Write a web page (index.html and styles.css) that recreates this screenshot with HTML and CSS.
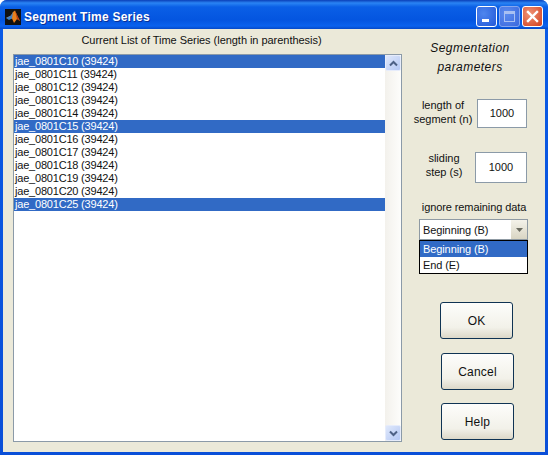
FILE: index.html
```html
<!DOCTYPE html>
<html lang="en">
<head>
<meta charset="utf-8">
<title>Segment Time Series</title>
<link rel="stylesheet" href="styles.css">
</head>
<body>
<div class="window">
  <header class="titlebar">
    <svg class="app-icon" width="16" height="16" viewBox="0 0 16 16">
      <rect width="16" height="16" fill="#111"/>
      <path d="M1 9 L6 6.5 L8 3 L10 1.5 L12 6 L15 12 L12 10 L9 14 L7 9.5 Z" fill="#e8801c"/>
      <path d="M1 9 L6 6.5 L8 3 L7 9.5 L4 11 Z" fill="#3f7fc4"/>
      <path d="M10 1.5 L12 6 L15 12 L12 10 Z" fill="#b83a12"/>
    </svg>
    <span class="title">Segment Time Series</span>
    <div class="controls">
      <div class="ctl ctl-min"><span class="min-glyph"></span></div>
      <div class="ctl ctl-max"><span class="max-glyph"></span></div>
      <div class="ctl ctl-close">
        <svg width="13" height="13" viewBox="0 0 13 13"><path d="M2 2 L11 11 M11 2 L2 11" stroke="#fff" stroke-width="2.4" stroke-linecap="square"/></svg>
      </div>
    </div>
  </header>
  <main class="client">
    <section class="left">
      <div class="list-heading">Current List of Time Series (length in parenthesis)</div>
      <div class="listbox">
        <div class="rows">
          <div class="row sel">jae_0801C10 (39424)</div>
          <div class="row">jae_0801C11 (39424)</div>
          <div class="row">jae_0801C12 (39424)</div>
          <div class="row">jae_0801C13 (39424)</div>
          <div class="row">jae_0801C14 (39424)</div>
          <div class="row sel">jae_0801C15 (39424)</div>
          <div class="row">jae_0801C16 (39424)</div>
          <div class="row">jae_0801C17 (39424)</div>
          <div class="row">jae_0801C18 (39424)</div>
          <div class="row">jae_0801C19 (39424)</div>
          <div class="row">jae_0801C20 (39424)</div>
          <div class="row sel">jae_0801C25 (39424)</div>
        </div>
        <div class="scrollbar">
          <div class="sb-btn"><svg width="9" height="7" viewBox="0 0 9 7"><path d="M1 5.5 L4.5 2 L8 5.5" fill="none" stroke="#4d6185" stroke-width="2"/></svg></div>
          <div class="sb-btn"><svg width="9" height="7" viewBox="0 0 9 7"><path d="M1 1.5 L4.5 5 L8 1.5" fill="none" stroke="#4d6185" stroke-width="2"/></svg></div>
        </div>
      </div>
    </section>
    <aside class="right">
      <div class="heading">Segmentation<br>parameters</div>
      <div class="field field-len">
        <div class="label">length of<br>segment (n)</div>
        <div class="input">1000</div>
      </div>
      <div class="field field-step">
        <div class="label">sliding<br>step (s)</div>
        <div class="input input-step">1000</div>
      </div>
      <div class="ignore">ignore remaining data</div>
      <div class="combo-wrap">
        <div class="combo">
          <span>Beginning (B)</span>
          <div class="combo-btn"><svg width="7" height="4" viewBox="0 0 7 4"><path d="M0 0 H7 L3.5 4 Z" fill="#6b6b60"/></svg></div>
        </div>
        <div class="dropdown">
          <div class="opt opt-sel">Beginning (B)</div>
          <div class="opt">End (E)</div>
        </div>
      </div>
      <div class="buttons">
        <div class="btn btn-ok">OK</div>
        <div class="btn">Cancel</div>
        <div class="btn">Help</div>
      </div>
    </aside>
  </main>
</div>
</body>
</html>
```
FILE: styles.css
```css
* { box-sizing: border-box; }
html, body { margin: 0; padding: 0; }
body { width: 548px; height: 455px; overflow: hidden; font-family: "Liberation Sans", Arial, sans-serif; font-size: 11px; color: #111; }
.window { width: 548px; height: 455px; display: flex; flex-direction: column; border-radius: 7px 7px 0 0; overflow: hidden; background: linear-gradient(#0a5be6, #0a4fd8); }
.titlebar { height: 29px; flex: none; display: flex; align-items: center; padding: 4px 5px 0 5px; background: linear-gradient(#0a3fb8 0, #2a84f4 3px, #0a5fe6 7px, #0455e0 20px, #0a62ee 26px, #0549c8 29px); }
.app-icon { flex: none; }
.title { margin-left: 3px; color: #fff; font-weight: 700; font-size: 12px; letter-spacing: .25px; text-shadow: 1px 1px 0 #0a2f96; }
.controls { margin-left: auto; display: flex; gap: 2px; }
.ctl { width: 21px; height: 21px; border: 1px solid #fff; border-radius: 3px; display: flex; align-items: center; justify-content: center; position: relative; }
.ctl-min { background: radial-gradient(circle at 35% 35%, #4f86ee, #2358d8); }
.ctl-max { background: radial-gradient(circle at 35% 35%, #5d8cef, #3a68dd); border-color: #86a6ee; }
.ctl-close { background: radial-gradient(circle at 35% 35%, #ef9377, #d23f1c); }
.min-glyph { width: 7px; height: 3px; background: #fff; position: absolute; left: 5px; bottom: 4px; }
.max-glyph { width: 11px; height: 11px; border: 1px solid #a9c0f2; border-top-width: 3px; }
.client { margin: 0 3px 3px; height: 423px; background: #ebe9d9; display: flex; }
.left { width: 400px; flex: none; padding-left: 10px; }
.list-heading { height: 25px; padding: 5px 12px 0 0; line-height: 13px; text-align: center; width: 389px; white-space: nowrap; letter-spacing: -.04px; }
.listbox { width: 389px; height: 388px; border: 1px solid #8b9aa8; background: #fff; display: flex; }
.rows { flex: 1; min-width: 0; letter-spacing: -.2px; }
.row { height: 13px; line-height: 13px; padding-left: 1px; white-space: nowrap; }
.sel { background: #316ac5; color: #fff; }
.scrollbar { width: 16px; flex: none; background: linear-gradient(90deg, #f3f1ec, #fdfdfb); display: flex; flex-direction: column; justify-content: space-between; }
.sb-btn { height: 16px; border: 1px solid #e6ecfb; border-radius: 2px; background: linear-gradient(135deg, #dfe8fb, #b4c8f4); display: flex; align-items: center; justify-content: center; }
.right { flex: 1; min-width: 0; }
.heading { margin-top: 10px; margin-left: 7px; width: 120px; text-align: center; font-style: italic; font-size: 12px; line-height: 19px; letter-spacing: .45px; }
.field { display: flex; align-items: center; }
.label { text-align: center; line-height: 14px; }
.input { background: #fff; border: 1px solid #8b9aa8; text-align: center; line-height: 27px; height: 29px; width: 50px; }
.field-len { margin-top: 21px; margin-left: 10px; }
.field-len .label { width: 60px; margin-right: 4px; padding-bottom: 2px; }
.field-step { margin-top: 23px; margin-left: 15px; }
.field-step .label { width: 52px; margin-right: 5px; padding-bottom: 4px; }
.input-step { width: 52px; height: 31px; line-height: 29px; }
.ignore { margin-top: 18px; margin-left: 13px; width: 116px; text-align: center; white-space: nowrap; line-height: 13px; letter-spacing: -.1px; }
.combo-wrap { margin-left: 16px; margin-top: 5px; width: 109px; position: relative; }
.combo { height: 21px; background: #fff; border: 1px solid #8f9aa3; display: flex; align-items: center; padding-left: 3px; justify-content: space-between; letter-spacing: -.1px; }
.combo-btn { width: 16px; height: 19px; background: linear-gradient(#f4f2ea, #d9d5c3); display: flex; align-items: center; justify-content: center; }
.dropdown { position: absolute; left: 0; top: 21px; width: 109px; height: 34px; border: 1px solid #000; background: #fff; letter-spacing: -.1px; }
.opt { height: 16px; line-height: 16px; padding-left: 3px; }
.opt-sel { background: #316ac5; color: #fff; }
.buttons { margin-top: 62px; margin-left: 38px; display: flex; flex-direction: column; gap: 13px; }
.btn { width: 73px; height: 37px; border: 1px solid #0f3353; border-radius: 3px; background: linear-gradient(#fdfdfb, #f2f1e9 70%, #dcd8c8); display: flex; align-items: center; justify-content: center; font-size: 12px; letter-spacing: .2px; }
.btn-ok { margin-left: -1px; margin-bottom: 1px; }
```
